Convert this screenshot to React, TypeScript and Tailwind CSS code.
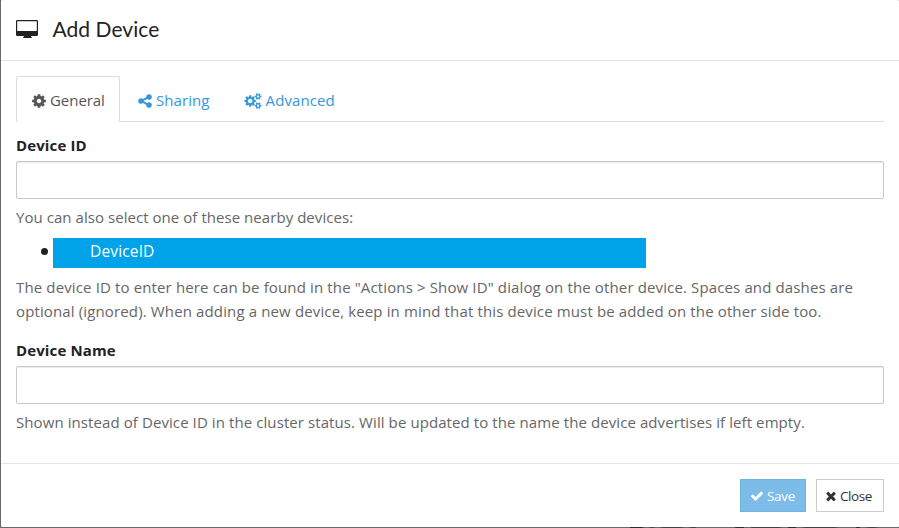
import type { ReactNode } from 'react';

const COG =
  'M1152 896q0-106-75-181t-181-75-181 75-75 181 75 181 181 75 181-75 75-181zm512-109v222q0 12-8 23t-20 13l-185 28q-19 54-39 91 35 50 107 138 10 12 10 25t-9 23q-27 37-99 108t-94 71q-12 0-26-9l-138-108q-44 23-91 38-16 136-29 186-7 28-36 28h-222q-14 0-24.5-8.5t-11.5-21.5l-28-184q-49-16-90-37l-141 107q-10 9-25 9-14 0-25-11-126-114-165-168-7-10-7-23 0-12 8-23 15-21 51-66.5t54-70.5q-27-50-41-99l-183-27q-13-2-21-12.5t-8-23.5v-222q0-12 8-23t19-13l186-28q14-46 39-92-40-57-107-138-10-12-10-24 0-10 9-23 26-36 98.5-107.5t94.5-71.5q13 0 26 10l138 107q44-23 91-38 16-136 29-186 7-28 36-28h222q14 0 24.5 8.5t11.5 21.5l28 184q49 16 90 37l142-107q9-9 24-9 13 0 25 10 129 119 165 170 7 8 7 22 0 12-8 23-15 21-51 66.5t-54 70.5q26 50 41 98l183 28q13 2 21 12.5t8 23.5z';
const COGS =
  'M896 896q0-106-75-181t-181-75-181 75-75 181 75 181 181 75 181-75 75-181zm768 512q0-52-38-90t-90-38-90 38-38 90q0 53 37.5 90.5t90.5 37.5 90.5-37.5 37.5-90.5zm0-1024q0-52-38-90t-90-38-90 38-38 90q0 53 37.5 90.5t90.5 37.5 90.5-37.5 37.5-90.5zm-384 421v185q0 10-7 19.5t-16 10.5l-155 24q-11 35-32 76 34 48 90 115 7 11 7 20 0 12-7 19-23 30-82.5 89.5t-78.5 59.5q-11 0-21-7l-115-90q-37 19-77 31-11 108-23 155-7 24-30 24h-186q-11 0-20-7.5t-10-17.5l-23-153q-34-10-75-31l-118 89q-7 7-20 7-11 0-21-8-144-133-144-160 0-9 7-19 10-14 41-53t47-61q-23-44-35-82l-152-24q-10-1-17-9.5t-7-19.5v-185q0-10 7-19.5t16-10.5l155-24q11-35 32-76-34-48-90-115-7-11-7-20 0-12 7-20 22-30 82-89t79-59q11 0 21 7l115 90q34-18 77-32 11-108 23-154 7-24 30-24h186q11 0 20 7.5t10 17.5l23 153q34 10 75 31l118-89q8-7 20-7 11 0 21 8 144 133 144 160 0 8-7 19-12 16-42 54t-45 60q23 48 34 82l152 23q10 2 17 10.5t7 19.5zm640 533v140q0 16-149 31-12 27-30 52 51 113 51 138 0 4-4 7-122 71-124 71-8 0-46-47t-52-68q-20 2-30 2t-30-2q-14 21-52 68t-46 47q-2 0-124-71-4-3-4-7 0-25 51-138-18-25-30-52-149-15-149-31v-140q0-16 149-31 13-29 30-52-51-113-51-138 0-4 4-7 4-2 35-20t59-34 30-16q8 0 46 46.5t52 67.5q20-2 30-2t30 2q51-71 92-112l6-2q4 0 124 70 4 3 4 7 0 25-51 138 17 23 30 52 149 15 149 31zm0-1024v140q0 16-149 31-12 27-30 52 51 113 51 138 0 4-4 7-122 71-124 71-8 0-46-47t-52-68q-20 2-30 2t-30-2q-14 21-52 68t-46 47q-2 0-124-71-4-3-4-7 0-25 51-138-18-25-30-52-149-15-149-31v-140q0-16 149-31 13-29 30-52-51-113-51-138 0-4 4-7 4-2 35-20t59-34 30-16q8 0 46 46.5t52 67.5q20-2 30-2t30 2q51-71 92-112l6-2q4 0 124 70 4 3 4 7 0 25-51 138 17 23 30 52 149 15 149 31z';
const SHARE =
  'M1344 1024q133 0 226.5 93.5t93.5 226.5-93.5 226.5-226.5 93.5-226.5-93.5-93.5-226.5q0-12 2-34l-360-180q-92 86-218 86-133 0-226.5-93.5t-93.5-226.5 93.5-226.5 226.5-93.5q126 0 218 86l360-180q-2-22-2-34 0-133 93.5-226.5t226.5-93.5 226.5 93.5 93.5 226.5-93.5 226.5-226.5 93.5q-126 0-218-86l-360 180q2 22 2 34t-2 34l360 180q92-86 218-86z';
const CHECK =
  'M1671 566q0 40-28 68l-724 724-136 136q-28 28-68 28t-68-28l-136-136-362-362q-28-28-28-68t28-68l136-136q28-28 68-28t68 28l294 295 656-657q28-28 68-28t68 28l136 136q28 28 28 68z';
const TIMES =
  'M1490 1322q0 40-28 68l-136 136q-28 28-68 28t-68-28l-294-294-294 294q-28 28-68 28t-68-28l-136-136q-28-28-28-68t28-68l294-294-294-294q-28-28-28-68t28-68l136-136q28-28 68-28t68 28l294 294 294-294q28-28 68-28t68 28l136 136q28 28 28 68t-28 68l-294 294 294 294q28 28 28 68z';

function Icon({ d, box, className }: { d: string; box: string; className: string }) {
  return (
    <svg viewBox={box} fill="currentColor" className={`shrink-0 ${className}`}>
      <path d={d} />
    </svg>
  );
}

function Label({ children }: { children: ReactNode }) {
  return (
    <label className="block h-[31px] pt-[3px] text-[15px] leading-6 font-bold tracking-[0.12px] text-[#222]">{children}</label>
  );
}

function TextInput() {
  return (
    <input
      type="text"
      className="block h-[38px] w-full rounded-[2px] border border-[#c8c8c8] bg-white px-3 shadow-[inset_0_1px_1px_rgba(0,0,0,0.075)] outline-none"
    />
  );
}

export default function App() {
  return (
    <div className="flex h-[528px] w-[899px] flex-col overflow-hidden bg-[#69696b] pl-px font-['Open_Sans','Noto_Sans',sans-serif] text-[15px] text-[#666]">
      <div className="flex h-[527px] shrink-0 flex-col rounded-[1px] bg-white">
        <header className="flex h-[61px] shrink-0 items-start border-b border-[#e5e5e5] pt-[14px] pl-[15px] text-[#222]">
          <svg viewBox="0 0 22 18" className="mt-[6px] h-[18px] w-[22px] shrink-0" fill="currentColor">
            <path
              fillRule="evenodd"
              d="M1.3 0h19.4Q22 0 22 1.3v13.4q0 1.3-1.3 1.3H15v1l.8.3v.7H7v-.7l.8-.3v-1H1.3Q0 16 0 14.7V1.3Q0 0 1.3 0zM1.2 1.2V11h19.6V1.2z"
            />
          </svg>
          <h4 className="ml-[14.5px] font-[Lato,sans-serif] text-[21px] leading-[30px] tracking-[0.05px]">Add Device</h4>
        </header>

        <main className="h-[402px] shrink-0 pt-[15px] pr-[15px] pl-[15px]">
          <nav className="flex h-[46px] border-b border-[#ddd]">
            <a className="flex h-[46px] w-[104px] items-center rounded-t-[2px] border border-b-0 border-[#ddd] bg-white pt-[2px] pl-[14px] text-[#555]">
              <Icon d={COG} box="0 0 1792 1792" className="size-4" />
              <span className="ml-[3px] tracking-[-0.05px]">General</span>
            </a>
            <a className="ml-[17px] flex h-[46px] items-center pt-[3px] text-[#3498db]">
              <Icon d={SHARE} box="0 0 1792 1792" className="size-4" />
              <span className="ml-[3px] tracking-[0.08px]">Sharing</span>
            </a>
            <a className="ml-[34px] flex h-[46px] items-center pt-[3px] text-[#3498db]">
              <Icon d={COGS} box="0 0 1920 1792" className="h-4 w-[18px]" />
              <span className="ml-[4px] tracking-[0.1px]">Advanced</span>
            </a>
          </nav>

          <div className="pt-[8px]">
            <Label>Device ID</Label>
            <TextInput />
            <p className="mt-[6px] leading-6 tracking-[0.05px]">You can also select one of these nearby devices:</p>
            <ul className="mt-[9px] flex h-[30px] items-start pl-[25px]">
              <li className="flex items-start">
                <span className="mt-[10px] mr-[5px] size-[7px] rounded-full bg-[#222]" />
                <span className="block h-[30px] w-[593px] bg-[#00a2e8] pt-px pl-[37px] text-[15.5px] leading-6 tracking-[0.15px] text-white">
                  DeviceID
                </span>
              </li>
            </ul>
            <p className="mt-[7px] leading-6 tracking-[0.134px] whitespace-nowrap">
              The device ID to enter here can be found in the "Actions &gt; Show ID" dialog on the other device. Spaces and dashes are
              <br />
              optional (ignored). When adding a new device, keep in mind that this device must be added on the other side too.
            </p>
          </div>

          <div className="mt-[12px]">
            <Label>Device Name</Label>
            <TextInput />
            <p className="mt-[6px] leading-6 tracking-[0.087px] whitespace-nowrap">
              Shown instead of Device ID in the cluster status. Will be updated to the name the device advertises if left empty.
            </p>
          </div>
        </main>

        <footer className="flex h-[64px] shrink-0 justify-end gap-[10px] border-t border-[#e5e5e5] pt-[15px] pr-[15px] text-[13.5px]">
          <button className="flex h-[33px] w-[66px] items-center border border-[#6fb4e0] bg-[#7dbce8] pt-px pl-[9px] text-white">
            <Icon d={CHECK} box="0 0 1792 1792" className="size-[14px]" />
            <span className="ml-[3px] tracking-[-0.3px]">Save</span>
          </button>
          <button className="flex h-[33px] w-[68px] items-center border border-[#ccc] bg-white pt-px pl-[7px] text-[#333]">
            <Icon d={TIMES} box="0 0 1792 1792" className="size-[14px]" />
            <span className="ml-[2px] tracking-[-0.4px]">Close</span>
          </button>
        </footer>
      </div>
      <div className="flex h-px shrink-0 gap-[7px] pl-[629px]">
        <span className="w-[13px] bg-[#2e2c2e]" />
        <span className="w-[4px] bg-[#4a4344]" />
        <span className="w-[22px] bg-[#4a4344]" />
        <span className="w-[6px] bg-[#4a4344]" />
        <span className="ml-[32px] w-[9px] bg-[#2e2c2e]" />
        <span className="w-[30px] bg-[#4a4344]" />
        <span className="w-[8px] bg-[#2e2c2e]" />
        <span className="w-[34px] bg-[#4a4344]" />
        <span className="ml-[12px] w-[4px] bg-[#2e2c2e]" />
        <span className="w-[10px] bg-[#4a4344]" />
      </div>
    </div>
  );
}
